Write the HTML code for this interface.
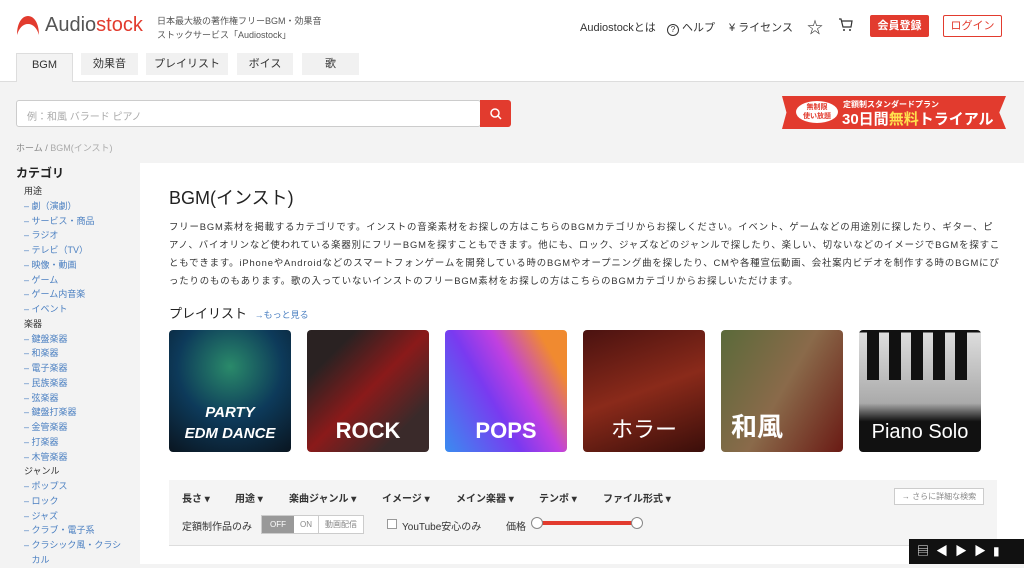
<!DOCTYPE html>
<html><head><meta charset="utf-8"><style>
*{margin:0;padding:0;box-sizing:border-box}
body{width:1024px;height:564px;overflow:hidden;background:#f3f3f3;font-family:"Liberation Sans","Noto Sans CJK JP",sans-serif;color:#333;position:relative}
.abs{position:absolute}
#hdr{left:0;top:0;width:1024px;height:82px;background:#fff;border-bottom:1px solid #ddd}
.tab{position:absolute;top:53px;height:22px;background:#f1f1f1;font-size:11px;text-align:center;line-height:22px;color:#333}
.nav{font-size:11px;color:#333;top:19px}
.side{left:24px;font-size:9px;color:#333;line-height:14.75px;top:184px}
.side a{display:block;color:#4a7fc1;text-decoration:none}
.tile{position:absolute;top:330px;width:122px;height:122px;border-radius:4px;overflow:hidden;color:#fff;text-align:center;font-weight:bold}
.tile span{position:absolute;left:0;right:0;bottom:8px}
.f{font-size:10px;font-weight:bold;color:#333;position:absolute;top:490px}
.desc div{white-space:nowrap;height:18px}
</style></head><body>
<div id="hdr" class="abs"></div>
<svg class="abs" style="left:16px;top:15px" width="24" height="22" viewBox="0 0 24 22"><path d="M1 20 C1 8 6 1 12 1 C18 1 23 8 23 20 C21 13 17 9 12 9 C7 9 3 13 1 20Z" fill="#e23b2e"/></svg>
<div class="abs" style="left:45px;top:14px;font-size:20px;color:#555;font-weight:500">Audio<span style="color:#e23b2e">stock</span></div>
<div class="abs" style="left:157px;top:14px;font-size:9px;color:#555;line-height:14px">日本最大級の著作権フリーBGM・効果音<br>ストックサービス「Audiostock」</div>
<div class="tab" style="left:16px;width:57px;top:53px;height:29px;background:#f3f3f3;border:1px solid #ddd;border-bottom:none">BGM</div>
<div class="tab" style="left:81px;width:57px">効果音</div>
<div class="tab" style="left:146px;width:82px">プレイリスト</div>
<div class="tab" style="left:237px;width:56px">ボイス</div>
<div class="tab" style="left:302px;width:57px">歌</div>
<div class="abs nav" style="left:580px">Audiostockとは</div>
<div class="abs nav" style="left:667px"><span style="display:inline-block;width:12px;height:12px;border:1px solid #333;border-radius:50%;font-size:8px;text-align:center;line-height:10px;vertical-align:-1px">?</span> ヘルプ</div>
<div class="abs nav" style="left:729px">¥ ライセンス</div>
<div class="abs nav" style="left:807px;font-size:16px;top:14px">☆</div>
<svg class="abs" style="left:838px;top:18px" width="15" height="14" viewBox="0 0 15 14"><path d="M1 1h2l2 8h8l1-6H4" fill="none" stroke="#333" stroke-width="1.2"/><circle cx="6" cy="12" r="1" fill="#333"/><circle cx="12" cy="12" r="1" fill="#333"/></svg>
<div class="abs" style="left:870px;top:15px;width:59px;height:22px;background:#e23b2e;color:#fff;font-size:11px;font-weight:bold;text-align:center;line-height:22px;border-radius:2px">会員登録</div>
<div class="abs" style="left:943px;top:15px;width:59px;height:22px;border:1px solid #e23b2e;color:#e23b2e;font-size:11px;text-align:center;line-height:20px;border-radius:2px;background:#fff">ログイン</div>
<div class="abs" style="left:16px;top:100px;width:465px;height:27px;background:#fff;border:1px solid #ccc;border-radius:3px;font-size:10px;color:#aaa;padding:7px 10px">例：和風 バラード ピアノ</div>
<div class="abs" style="left:480px;top:100px;width:31px;height:27px;background:#e23b2e;border-radius:0 3px 3px 0"><svg width="31" height="27"><circle cx="15" cy="13" r="4" fill="none" stroke="#fff" stroke-width="1.5"/><path d="M18 16l3 3" stroke="#fff" stroke-width="1.5"/></svg></div>
<div class="abs" style="left:782px;top:96px;width:224px;height:33px;background:#e23b2e;clip-path:polygon(0 0,100% 0,97% 50%,100% 100%,0 100%,2% 50%)"></div>
<div class="abs" style="left:796px;top:101px;width:42px;height:22px;background:#fff;border-radius:50%;color:#e23b2e;font-size:7px;font-weight:bold;text-align:center;line-height:9px;padding-top:2px">無制限<br>使い放題</div>
<div class="abs" style="left:843px;top:99px;color:#fff;font-size:8px;font-weight:bold">定額制スタンダードプラン</div>
<div class="abs" style="left:842px;top:108px;color:#fff;font-size:15px;font-weight:bold">30日間<span style="color:#ffe14d">無料</span>トライアル</div>
<div class="abs" style="left:16px;top:141px;font-size:9px;color:#888">ホーム / <span style="color:#aaa">BGM(インスト)</span></div>
<div class="abs" style="left:140px;top:163px;width:884px;height:401px;background:#fff"></div>
<div class="abs" style="left:16px;top:164px;font-size:12px;font-weight:bold;color:#222">カテゴリ</div>
<div class="abs side">用途<a>– 劇（演劇）</a><a>– サービス・商品</a><a>– ラジオ</a><a>– テレビ（TV）</a><a>– 映像・動画</a><a>– ゲーム</a><a>– ゲーム内音楽</a><a>– イベント</a>楽器<a>– 鍵盤楽器</a><a>– 和楽器</a><a>– 電子楽器</a><a>– 民族楽器</a><a>– 弦楽器</a><a>– 鍵盤打楽器</a><a>– 金管楽器</a><a>– 打楽器</a><a>– 木管楽器</a>ジャンル<a>– ポップス</a><a>– ロック</a><a>– ジャズ</a><a>– クラブ・電子系</a><a>– クラシック風・クラシ<br>&nbsp;&nbsp;&nbsp;カル</a></div>
<div class="abs" style="left:169px;top:184px;font-size:18px;color:#222">BGM(インスト)</div>
<div class="abs desc" style="left:169px;top:218px;font-size:9.4px;line-height:18px;color:#333;letter-spacing:0.87px">
<div>フリーBGM素材を掲載するカテゴリです。インストの音楽素材をお探しの方はこちらのBGMカテゴリからお探しください。イベント、ゲームなどの用途別に探したり、ギター、ピ</div>
<div>アノ、バイオリンなど使われている楽器別にフリーBGMを探すこともできます。他にも、ロック、ジャズなどのジャンルで探したり、楽しい、切ないなどのイメージでBGMを探すこ</div>
<div>ともできます。iPhoneやAndroidなどのスマートフォンゲームを開発している時のBGMやオープニング曲を探したり、CMや各種宣伝動画、会社案内ビデオを制作する時のBGMにぴ</div>
<div>ったりのものもあります。歌の入っていないインストのフリーBGM素材をお探しの方はこちらのBGMカテゴリからお探しいただけます。</div>
</div>
<div class="abs" style="left:169px;top:303px;font-size:13px;color:#222">プレイリスト <span style="font-size:9px;color:#4a7fc1;margin-left:4px">→もっと見る</span></div>
<div class="tile" style="left:169px;background:radial-gradient(circle at 50% 30%,#2a8a6a,#0d3a5a 50%,#0a1520);font-size:15px;font-style:italic"><span style="line-height:21px">PARTY<br>EDM DANCE</span></div>
<div class="tile" style="left:307px;background:linear-gradient(135deg,#2a2222 20%,#8a1a1a 50%,#3a2a2a 80%);font-size:22px"><span>ROCK</span></div>
<div class="tile" style="left:445px;background:linear-gradient(60deg,#3a8cf0,#7a3af0 40%,#c040e0 60%,#f08a30 85%);font-size:22px"><span>POPS</span></div>
<div class="tile" style="left:583px;background:linear-gradient(160deg,#4a1210,#8a2a1a 50%,#3a0e0a);font-size:22px;font-weight:normal"><span>ホラー</span></div>
<div class="tile" style="left:721px;background:linear-gradient(120deg,#5a6a3a,#8a6a4a 50%,#6a1a14);font-size:26px"><span style="text-align:left;padding-left:10px">和風</span></div>
<div class="tile" style="left:859px;background:linear-gradient(180deg,#111 0,#111 2%,#ddd 2%,#aaa 60%,#111 75%);font-size:20px;font-weight:normal"><span>Piano Solo</span><div style="position:absolute;top:0;left:8px;width:106px;height:50px;background:repeating-linear-gradient(90deg,#111 0 12px,transparent 12px 22px)"></div></div>
<div class="abs" style="left:169px;top:480px;width:828px;height:66px;background:#f4f4f4;border-bottom:1px solid #ddd"></div>
<div class="f" style="left:182px">長さ ▾</div><div class="f" style="left:235px">用途 ▾</div><div class="f" style="left:289px">楽曲ジャンル ▾</div><div class="f" style="left:382px">イメージ ▾</div><div class="f" style="left:456px">メイン楽器 ▾</div><div class="f" style="left:539px">テンポ ▾</div><div class="f" style="left:603px">ファイル形式 ▾</div>
<div class="abs" style="left:894px;top:488px;width:90px;height:17px;border:1px solid #ccc;background:#fff;font-size:8px;color:#888;text-align:center;line-height:15px">→ さらに詳細な検索</div>
<div class="abs" style="left:182px;top:518px;font-size:10px">定額制作品のみ</div>
<div class="abs" style="left:261px;top:515px;width:103px;height:19px;border:1px solid #ccc;background:#fff;font-size:8px;color:#888;display:flex;line-height:17px"><div style="width:32px;background:#999;color:#fff;text-align:center">OFF</div><div style="width:25px;text-align:center;border-right:1px solid #ccc">ON</div><div style="flex:1;text-align:center">動画配信</div></div>
<div class="abs" style="left:387px;top:519px;width:10px;height:10px;border:1px solid #999;background:#fff"></div>
<div class="abs" style="left:402px;top:518px;font-size:10px">YouTube安心のみ</div>
<div class="abs" style="left:506px;top:518px;font-size:10px">価格</div>
<div class="abs" style="left:537px;top:521px;width:100px;height:4px;background:#e23b2e"></div>
<div class="abs" style="left:531px;top:517px;width:12px;height:12px;border:1px solid #888;background:#fff;border-radius:50%"></div>
<div class="abs" style="left:631px;top:517px;width:12px;height:12px;border:1px solid #888;background:#fff;border-radius:50%"></div>
<div class="abs" style="left:909px;top:539px;width:115px;height:25px;background:#111;color:#fff;font-size:12px;line-height:25px;padding-left:8px;letter-spacing:7px">▤◀▶▶▮</div>
</body></html>
